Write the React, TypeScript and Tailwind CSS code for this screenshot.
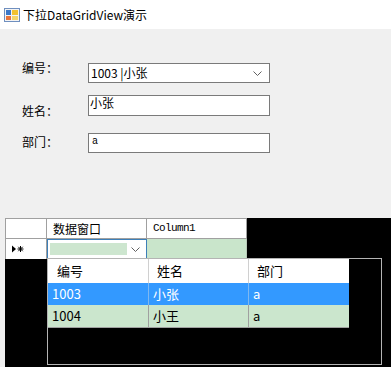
import React from "react";

function FormIcon() {
  return (
    <svg width="16" height="16" viewBox="0 0 16 16" className="block">
      <rect x="0.5" y="1.5" width="15" height="13" fill="#f4f4f4" stroke="#6f8fbf" />
      <rect x="2" y="3" width="5" height="5" fill="#3c78c8" />
      <rect x="8" y="3" width="6" height="5" fill="#f2c230" />
      <rect x="2" y="9" width="5" height="4" fill="#e8743b" />
      <rect x="8" y="9" width="6" height="4" fill="#f5d66a" />
    </svg>
  );
}

function Chevron() {
  return (
    <svg width="9" height="5" viewBox="0 0 9 5" className="block">
      <polyline points="0.5,0.5 4.5,4.5 8.5,0.5" fill="none" stroke="#606060" strokeWidth="1" />
    </svg>
  );
}

export default function App() {
  return (
    <div className="w-[391px] h-[367px] bg-[#f0f0f0] overflow-hidden relative text-black font-['Noto_Sans_CJK_SC',sans-serif]">
      {/* title bar */}
      <div className="h-[29px] bg-white flex items-center pl-[4px] gap-[3px]">
        <FormIcon />
        <span className="text-[12px] leading-[16px]">下拉DataGridView演示</span>
      </div>

      {/* form rows */}
      <div className="flex items-start mt-[34px] pl-[22px]">
        <div className="w-[66px] text-[12px] leading-[14px] mt-[-2px]">编号：</div>
        <div className="w-[182px] h-[20px] border border-[#7a7a7a] bg-white flex items-center pl-[2px] pr-[7px]">
          <span className="text-[12px] leading-[14px] flex-1">1003 |小张</span>
          <Chevron />
        </div>
      </div>
      <div className="flex items-start mt-[12px] pl-[22px]">
        <div className="w-[66px] text-[12px] leading-[14px] mt-[9px]">姓名：</div>
        <div className="w-[182px] h-[21px] border border-[#7a7a7a] bg-white flex items-center pl-[1px]">
          <span className="text-[12px] leading-[14px] mt-[-6px]">小张</span>
        </div>
      </div>
      <div className="flex items-start mt-[15px] pl-[22px]">
        <div className="w-[66px] text-[12px] leading-[14px] mt-[2px]">部门：</div>
        <div className="w-[182px] h-[20px] border border-[#7a7a7a] bg-white flex items-center pl-[3px]">
          <span className="text-[10px] leading-[12px] font-['Liberation_Mono',monospace] mt-[-3px]">a</span>
        </div>
      </div>

      {/* data grid */}
      <div className="mt-[65px] ml-[5px] w-[386px] h-[151px] bg-black">
        <div className="w-[242px] border-t border-l border-[#a0a0a0]">
          <div className="flex h-[20px] bg-white border-b border-[#a0a0a0]">
            <div className="w-[41px] border-r border-[#a0a0a0]" />
            <div className="w-[100px] border-r border-[#a0a0a0] flex items-center pl-[6px] text-[12px] leading-[14px]">数据窗口</div>
            <div className="w-[100px] border-r border-[#a0a0a0] flex items-center pl-[6px] text-[11px] leading-[13px] tracking-[-0.6px] font-['Liberation_Mono',monospace]">Column1</div>
          </div>
          <div className="flex h-[20px]">
            <div className="w-[41px] bg-white border-r border-[#a0a0a0] flex items-center pl-[6px]">
              <svg width="12" height="8" viewBox="0 0 12 8" className="block">
                <polygon points="0,0.5 4,4 0,7.5" fill="#000" />
                <g stroke="#000" strokeWidth="1">
                  <line x1="8.5" y1="1" x2="8.5" y2="7" />
                  <line x1="5.5" y1="4" x2="11.5" y2="4" />
                  <line x1="6.3" y1="1.8" x2="10.7" y2="6.2" />
                  <line x1="10.7" y1="1.8" x2="6.3" y2="6.2" />
                </g>
              </svg>
            </div>
            <div className="w-[100px] bg-white border border-[#3d7fb8] flex items-center pl-[2px] pr-[6px] gap-[4px]">
              <div className="flex-1 h-[12px] bg-[#cde6cf]" />
              <Chevron />
            </div>
            <div className="w-[100px] bg-[#c9e5cb] border-r border-[#b8c8b8]" />
          </div>
        </div>
      </div>

      {/* dropdown popup */}
      <div className="absolute left-[47px] top-[258px] w-[335px] h-[107px] border border-[#b4b4b4] bg-black">
        <div className="w-[301px]">
          <div className="flex h-[24px] bg-white text-[13px] leading-[16px]">
            <div className="w-[101px] border-r border-[#d0d0d0] flex items-center pl-[9px]">编号</div>
            <div className="w-[100px] border-r border-[#d0d0d0] flex items-center pl-[8px]">姓名</div>
            <div className="w-[100px] flex items-center pl-[8px]">部门</div>
          </div>
          <div className="flex h-[22px] bg-[#3399ff] text-white text-[13px] leading-[16px]">
            <div className="w-[101px] border-r border-[#7fb8f0] flex items-center pl-[4px]">1003</div>
            <div className="w-[100px] border-r border-[#7fb8f0] flex items-center pl-[4px]">小张</div>
            <div className="w-[100px] flex items-center pl-[4px]">a</div>
          </div>
          <div className="flex h-[23px] bg-[#cbe6cd] text-[13px] leading-[16px] border-b border-[#a0a0a0]">
            <div className="w-[101px] border-r border-[#a0a0a0] flex items-center pl-[4px]">1004</div>
            <div className="w-[100px] border-r border-[#a0a0a0] flex items-center pl-[4px]">小王</div>
            <div className="w-[100px] flex items-center pl-[4px]">a</div>
          </div>
        </div>
      </div>
    </div>
  );
}
